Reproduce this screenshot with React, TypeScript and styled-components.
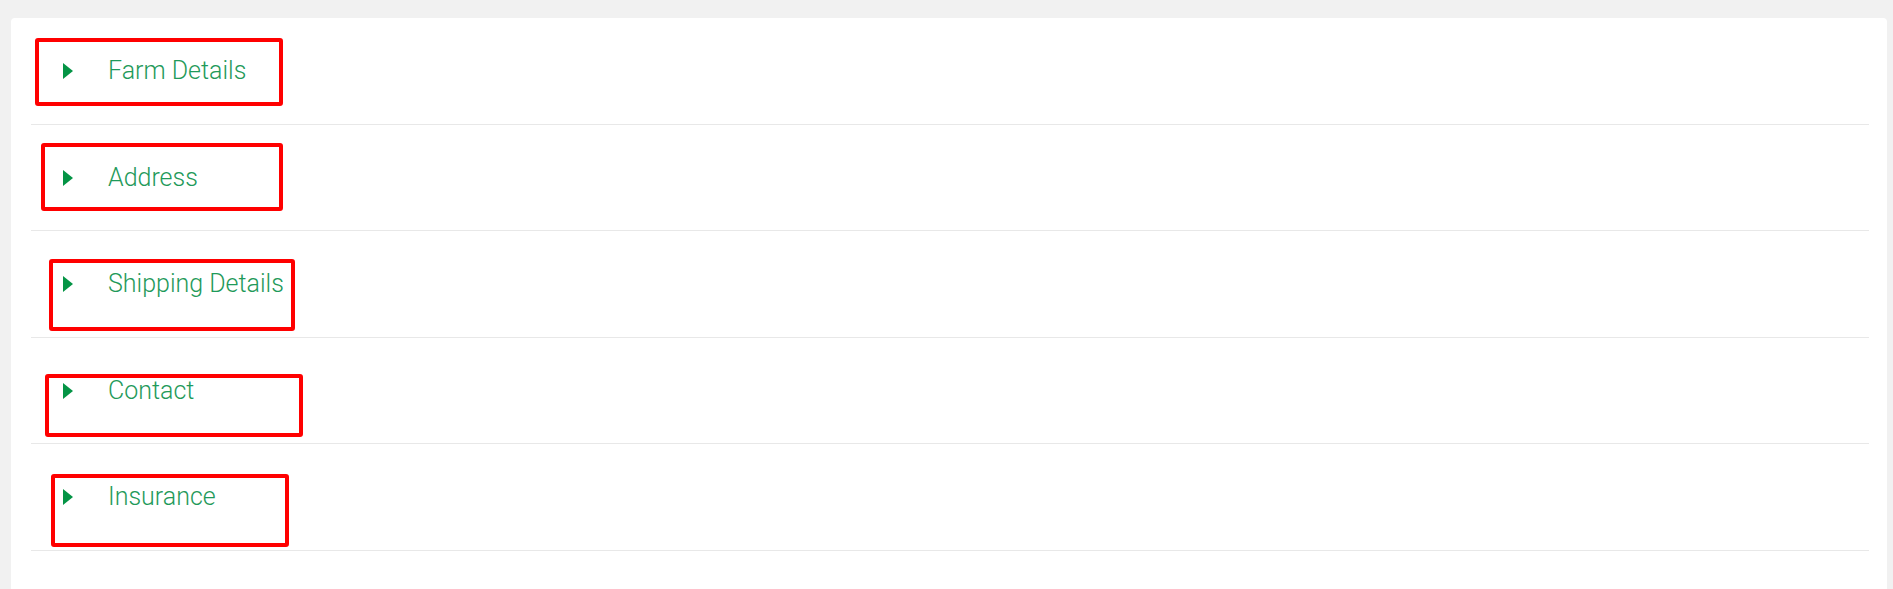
import React from "react";
import styled, { createGlobalStyle } from "styled-components";

const Global = createGlobalStyle`
  html, body { margin: 0; padding: 0; background: #f1f1f1; }
  body { font-family: Roboto, "Liberation Sans", sans-serif; }
`;

const Page = styled.div`
  padding: 18px 6px 0 11px;
  min-height: 589px;
  box-sizing: border-box;
`;

const Card = styled.div`
  background: #ffffff;
  border-radius: 4px 4px 0 0;
  padding: 0 18px 40px 20px;
`;

const Row = styled.div`
  position: relative;
  height: 106.5px;
  box-sizing: border-box;
  border-bottom: 1px solid #e8e8e8;
`;

const Header = styled.div`
  display: flex;
  align-items: center;
  padding-top: 39px;
  height: 28px;
  cursor: pointer;
`;

const Caret = styled.span`
  display: block;
  width: 0;
  height: 0;
  margin-left: 32px;
  border-top: 8px solid transparent;
  border-bottom: 8px solid transparent;
  border-left: 10px solid #049445;
`;

const Title = styled.span`
  margin-left: 35px;
  font-size: 25px;
  font-weight: 300;
  line-height: 28px;
  color: #1f9a5a;
`;

const Highlight = styled.div<{ $l: number; $t: number; $w: number; $h: number }>`
  position: absolute;
  left: ${(p) => p.$l}px;
  top: ${(p) => p.$t}px;
  width: ${(p) => p.$w}px;
  height: ${(p) => p.$h}px;
  box-sizing: border-box;
  border: 4px solid #ff0000;
  border-radius: 3px;
  pointer-events: none;
`;

const sections = [
  { title: "Farm Details", box: { l: 4, t: 20, w: 248, h: 68 } },
  { title: "Address", box: { l: 10, t: 18, w: 242, h: 68 } },
  { title: "Shipping Details", box: { l: 18, t: 28, w: 246, h: 72 } },
  { title: "Contact", box: { l: 14, t: 36, w: 258, h: 63 } },
  { title: "Insurance", box: { l: 20, t: 30, w: 238, h: 73 } },
];

export default function App() {
  return (
    <>
      <Global />
      <Page>
        <Card>
          {sections.map((s) => (
            <Row key={s.title}>
              <Header>
                <Caret />
                <Title>{s.title}</Title>
              </Header>
              <Highlight $l={s.box.l} $t={s.box.t} $w={s.box.w} $h={s.box.h} />
            </Row>
          ))}
        </Card>
      </Page>
    </>
  );
}
